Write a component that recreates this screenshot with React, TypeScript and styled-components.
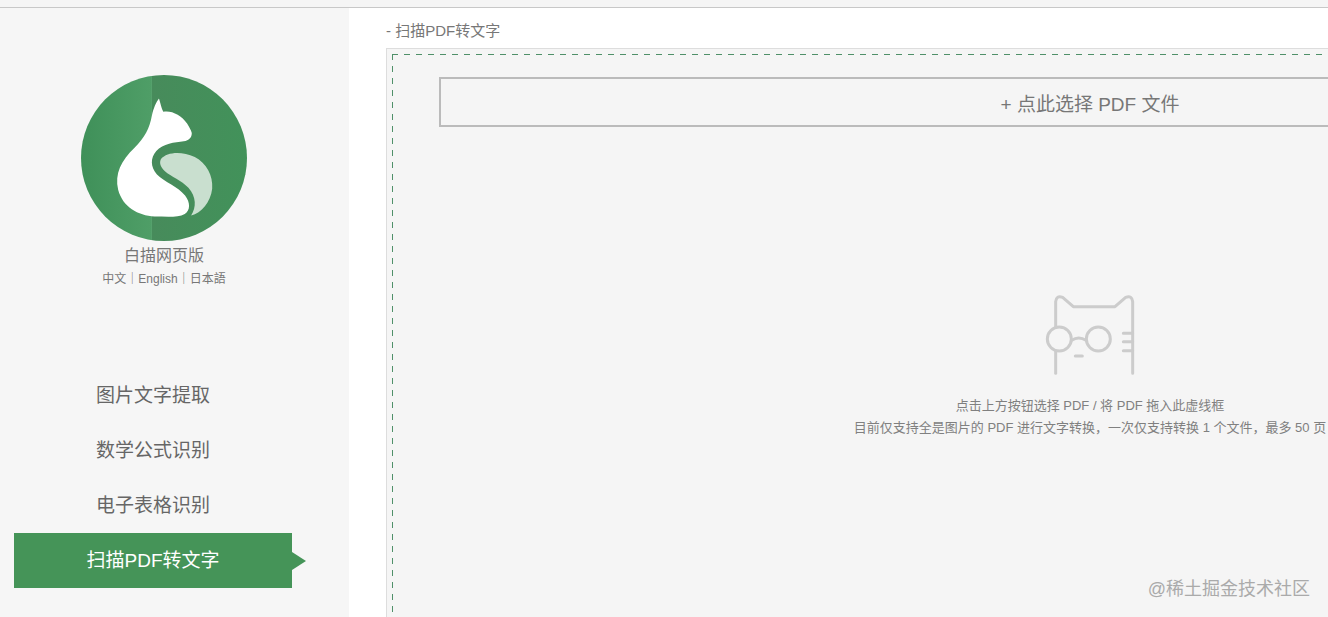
import React from "react";
import styled, { createGlobalStyle } from "styled-components";

const Global = createGlobalStyle`
  html, body { margin: 0; padding: 0; background: #fff; overflow: hidden; }
  body { font-family: "Liberation Sans", "Noto Sans CJK SC", sans-serif; }
`;
const Page = styled.div`
  position: relative;
  width: 1328px;
  height: 617px;
  overflow: hidden;
  display: flex;
  flex-direction: column;
`;
const TopStrip = styled.div`
  flex: none;
  height: 7px;
  background: #f5f5f5;
  border-bottom: 1px solid #c8c8c8;
`;
const Body = styled.div`
  flex: 1;
  display: flex;
  min-height: 0;
`;
const Sidebar = styled.aside`
  flex: none;
  width: 349px;
  background: #f6f6f6;
  box-sizing: border-box;
  padding-top: 67px;
`;
const Brand = styled.div`
  width: 328px;
  display: flex;
  flex-direction: column;
  align-items: center;
`;
const BrandName = styled.div`
  margin-top: 4px;
  font-size: 16px;
  line-height: 22px;
  color: #777;
`;
const Langs = styled.div`
  margin-top: 3px;
  font-size: 12px;
  line-height: 18px;
  color: #777;
`;
const Nav = styled.nav`
  margin: 80px 0 0 14px;
  width: 278px;
  display: flex;
  flex-direction: column;
`;
const NavItem = styled.div<{ $active?: boolean }>`
  position: relative;
  height: 55px;
  line-height: 55px;
  text-align: center;
  font-size: 19px;
  color: ${(p) => (p.$active ? "#fff" : "#666")};
  background: ${(p) => (p.$active ? "#459458" : "transparent")};
  ${(p) =>
    p.$active &&
    `&::after {
      content: "";
      position: absolute;
      left: 100%;
      top: 50%;
      margin-top: -9px;
      border-left: 14px solid #459458;
      border-top: 9px solid transparent;
      border-bottom: 9px solid transparent;
    }`}
`;
const Main = styled.main`
  flex: 1;
  min-width: 0;
  overflow: hidden;
  padding-left: 37px;
`;
const Title = styled.div`
  height: 40px;
  line-height: 46px;
  font-size: 15px;
  color: #777;
`;
const Zone = styled.section`
  width: 1408px;
  height: 700px;
  box-sizing: border-box;
  padding: 5px;
  background: #f5f5f5;
  border: 1px solid #ddd;
`;
const DashedArea = styled.div`
  height: 100%;
  box-sizing: border-box;
  padding: 23px 47px 0;
  display: flex;
  flex-direction: column;
  align-items: center;
  background-image:
    repeating-linear-gradient(90deg, #4f9069 0 6px, transparent 6px 12px),
    repeating-linear-gradient(180deg, #4f9069 0 6px, transparent 6px 12px);
  background-size: 100% 1px, 1px 100%;
  background-position: top left, top left;
  background-repeat: no-repeat;
`;
const PickButton = styled.button`
  flex: none;
  width: 100%;
  height: 50px;
  box-sizing: border-box;
  background: #f5f5f5;
  border: 2px solid #bbb;
  font-family: inherit;
  font-size: 19px;
  color: #777;
  padding: 0;
`;
const CatIcon = styled.svg`
  flex: none;
  margin-top: 158px;
  width: 120px;
  height: 100px;
`;
const Hint = styled.p`
  margin: 10px 0 0;
  font-size: 13px;
  line-height: 22px;
  color: #808080;
  text-align: center;
  white-space: nowrap;
`;
const Watermark = styled.div`
  position: absolute;
  right: 18px;
  top: 577px;
  font-size: 18px;
  line-height: 24px;
  color: #aaa;
`;

const Logo = () => (
  <svg width="166" height="166" viewBox="65 45 496 496" style={{ flex: "none" }}>
    <defs>
      <clipPath id="disc">
        <circle cx="313" cy="293" r="248" />
      </clipPath>
      <linearGradient id="leftShade" x1="0" x2="1" y1="0" y2="0">
        <stop offset="0" stopColor="#3f9059" />
        <stop offset="1" stopColor="#4f9e67" />
      </linearGradient>
      <linearGradient id="rightShade" x1="0" x2="1" y1="0" y2="0">
        <stop offset="0" stopColor="#478b5b" />
        <stop offset="1" stopColor="#42925a" />
      </linearGradient>
    </defs>
    <g clipPath="url(#disc)">
      <rect x="65" y="45" width="212" height="496" fill="url(#leftShade)" />
      <rect x="277" y="45" width="284" height="496" fill="url(#rightShade)" />
    </g>
    <path
      fill="#fff"
      d="M298 115 C303 130 305 145 311 155 C335 150 365 165 382 190 C388 200 394 210 396 218 C396 232 388 240 372 243 C345 246 310 250 290 272 C272 292 272 320 292 342 C315 365 355 378 376 405 C392 426 392 450 375 460 C355 472 320 468 285 468 C235 465 190 440 176 388 C165 340 185 300 225 262 C255 232 270 205 277 165 C281 145 290 125 298 115 Z"
    />
    <path
      fill="#c9dfcf"
      d="M304 296 C322 275 365 272 405 290 C440 308 460 345 457 385 C452 425 425 458 394 465 C410 440 410 410 386 382 C365 360 335 350 315 332 C303 320 298 308 304 296 Z"
    />
  </svg>
);

export default function App() {
  return (
    <Page>
      <Global />
      <TopStrip />
      <Body>
        <Sidebar>
          <Brand>
            <Logo />
            <BrandName>白描网页版</BrandName>
            <Langs>中文｜English｜日本語</Langs>
          </Brand>
          <Nav>
            <NavItem>图片文字提取</NavItem>
            <NavItem>数学公式识别</NavItem>
            <NavItem>电子表格识别</NavItem>
            <NavItem $active>扫描PDF转文字</NavItem>
          </Nav>
        </Sidebar>
        <Main>
          <Title>- 扫描PDF转文字</Title>
          <Zone>
            <DashedArea>
              <PickButton>+ 点此选择 PDF 文件</PickButton>
              <CatIcon viewBox="0 0 360 300" fill="none" stroke="#ccc" strokeWidth="9" strokeLinecap="round" strokeLinejoin="round">
                <path d="M77 126 L77 50 Q79 30 98 37 L130 65 L255 65 L287 37 Q306 30 308 50 L308 265" />
                <path d="M77 198 L77 265" />
                <circle cx="88" cy="162" r="36" />
                <circle cx="205" cy="162" r="36" />
                <path d="M125 166 Q146 152 168 166" />
                <path d="M280 145 H308 M280 170 H308 M280 197 H308" />
                <path d="M136 213 H157" />
              </CatIcon>
              <Hint>
                点击上方按钮选择 PDF / 将 PDF 拖入此虚线框
                <br />
                目前仅支持全是图片的 PDF 进行文字转换，一次仅支持转换 1 个文件，最多 50 页
              </Hint>
            </DashedArea>
          </Zone>
        </Main>
      </Body>
      <Watermark>@稀土掘金技术社区</Watermark>
    </Page>
  );
}
